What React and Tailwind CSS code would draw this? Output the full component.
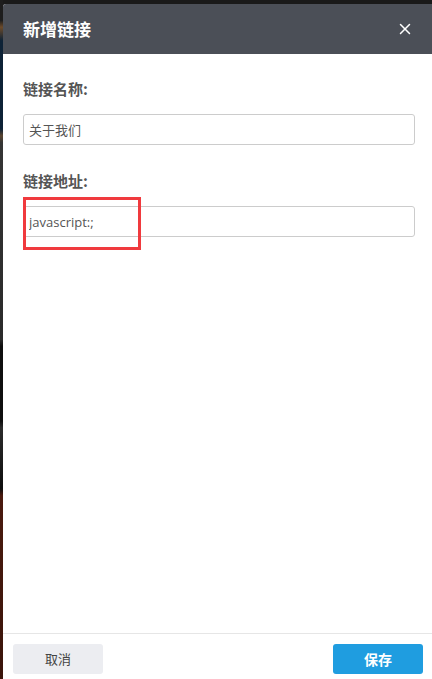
import { X } from 'lucide-react'

const cjk = "font-['Microsoft_YaHei','Noto_Sans_CJK_SC',sans-serif]"

function Field({ label, value, highlight }) {
  return (
    <div className="flex flex-col">
      <label className="text-[15px] leading-[20px] font-bold text-[#555] mb-[15px]">{label}</label>
      <div className="relative">
        <input
          readOnly
          value={value}
          className="w-full h-[31px] border border-[#ccc] rounded-[3px] px-[5px] text-[13px] text-[#555] outline-none font-['Open_Sans','Noto_Sans_CJK_SC',sans-serif]"
        />
        {highlight && (
          <div className="absolute left-0 top-[-9px] w-[118px] h-[53px] border-[3px] border-[#f03a3e] pointer-events-none" />
        )}
      </div>
    </div>
  )
}

export default function App() {
  return (
    <div className={`w-[432px] h-[679px] overflow-hidden bg-[#1a1a1a] flex ${cjk}`}>
      <div className="w-[3px] shrink-0 bg-[linear-gradient(to_bottom,#1d1d1d_0%,#1d1d1d_3%,#6b4a2a_4%,#0d2236_6%,#0d2236_19%,#5a4530_20%,#353535_21%,#2a2a2a_50%,#0e0e0e_51%,#0e0e0e_62%,#2b2b2b_63%,#0e0e0e_72%,#4a1a0e_73%,#3a140a_100%)]" />
      <div className="flex-1 flex flex-col pt-[4px]">
        <div className="flex-1 flex flex-col bg-white rounded-tl-[3px] overflow-hidden">
          <div className="h-[50px] shrink-0 bg-[#4b4f57] flex items-center justify-between pl-[20px] pr-[18px]">
            <span className="text-white text-[17px] font-bold">新增链接</span>
            <X size={18} strokeWidth={2} className="text-white" />
          </div>
          <div className="flex-1 flex flex-col px-[20px] pt-[25px] gap-[26px] pr-[17px]">
            <Field label="链接名称:" value="关于我们" />
            <Field label="链接地址:" value="javascript:;" highlight />
          </div>
          <div className="shrink-0 border-t border-[#e6e6e6] flex items-start justify-between pl-[10px] pr-[9px] pt-[10px] h-[46px]">
            <button className="w-[90px] h-[30px] rounded-[3px] bg-[#ecedf1] text-[13px] text-[#444]">取消</button>
            <button className="w-[90px] h-[30px] rounded-[3px] bg-[#1f9de0] text-[14px] font-bold text-white">保存</button>
          </div>
        </div>
      </div>
    </div>
  )
}
